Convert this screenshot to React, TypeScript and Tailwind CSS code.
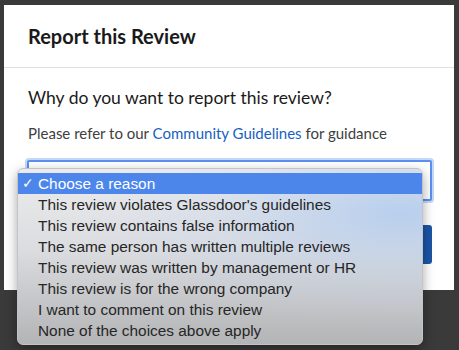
import { useState } from "react";

const reasons = [
  "Choose a reason",
  "This review violates Glassdoor's guidelines",
  "This review contains false information",
  "The same person has written multiple reviews",
  "This review was written by management or HR",
  "This review is for the wrong company",
  "I want to comment on this review",
  "None of the choices above apply",
];

const ReportModal = () => {
  const [selected, setSelected] = useState(0);

  return (
    <div className="w-[450px] h-[285px] bg-white font-['Lato',sans-serif] relative">
      {/* Encabezado */}
      <div className="h-[63px] flex items-center px-6 border-b border-[#e0e0e0]">
        <h2 className="text-[20px] font-bold text-[#1a1a1a]">Report this Review</h2>
      </div>

      {/* Contenido */}
      <div className="px-6 pt-[19px]">
        <p className="text-[17.5px] text-[#1a1a1a] leading-[22px]">Why do you want to report this review?</p>
        <p className="text-[15px] text-[#404040] mt-[15px] leading-[18px]">
          Please refer to our <a className="text-[#1861bf]">Community Guidelines</a> for guidance
        </p>
        <div className="mt-[18px] -ml-[1px] w-[405px] h-[41px] border-2 border-[#5b8ff0] rounded-[2px] shadow-[0_0_0_2px_rgba(91,143,240,0.35)] bg-white" />
        <div className="mt-[24px] flex justify-end -mr-[2px]">
          <button className="w-[120px] h-[39px] bg-[#1b55a8] text-white text-[15px] font-bold rounded-[3px]">
            Submit
          </button>
        </div>
      </div>

      {/* Menú desplegable */}
      <div className="absolute left-[13px] top-[163px] w-[406px] h-[177px] rounded-[6px] overflow-hidden border border-[#c4c4c6] shadow-[0_4px_12px_rgba(0,0,0,0.35)] bg-[linear-gradient(180deg,#ececee_0%,#dcdde0_45%,#b3b4b6_100%)] font-['Liberation_Sans',sans-serif]">
        <div className="absolute inset-0 bg-[radial-gradient(ellipse_at_95%_25%,rgba(170,200,240,0.75)_0%,rgba(190,210,240,0.25)_35%,rgba(255,255,255,0)_60%)]" />
        <div className="relative pt-[4px]">
          {reasons.map((r, i) => (
            <div
              key={r}
              onClick={() => setSelected(i)}
              className={
                i === selected
                  ? "h-[21px] flex items-center bg-[#4c86ea] text-white text-[15.4px]"
                  : "h-[21px] flex items-center text-[#262626] text-[15.4px]"
              }
            >
              <span className="w-[20px] pl-[4px] text-[14px]">{i === selected ? "✓" : ""}</span>
              <span>{r}</span>
            </div>
          ))}
        </div>
      </div>
    </div>
  );
};

export default function App() {
  return (
    <div className="w-[459px] h-[350px] bg-[#3a3a3a] pt-[5px] pl-[4px] overflow-hidden">
      <ReportModal />
    </div>
  );
}
